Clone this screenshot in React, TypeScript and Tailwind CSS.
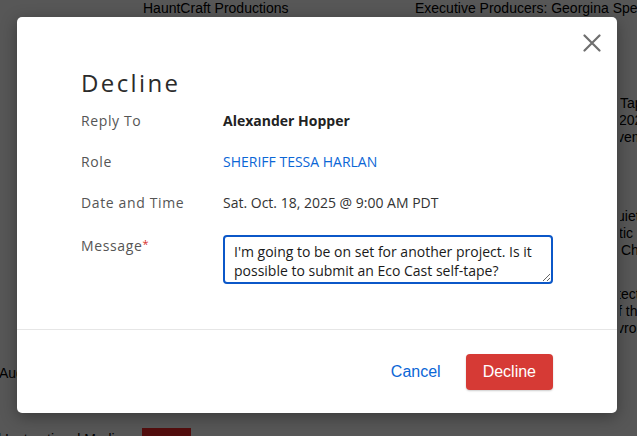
import React, { useState } from "react";

function CloseIcon() {
  return (
    <svg width="18" height="18" viewBox="0 0 18 18" fill="none" stroke="currentColor" strokeWidth="2.2" strokeLinecap="round">
      <path d="M1.5 1.5 L16.5 16.5 M16.5 1.5 L1.5 16.5" />
    </svg>
  );
}

// page behind the dialog, mostly hidden by the backdrop
function BackgroundPage() {
  return (
    <div className="grid h-full grid-cols-[142px_273px_205px_1fr] bg-white font-['Liberation_Sans',Arial,sans-serif] text-[14px] leading-[17px] text-black">
      <div className="flex flex-col pt-[365px] -ml-[1px]">
        <span className="whitespace-nowrap">Audio</span>
        <span className="mt-[49px] whitespace-nowrap -ml-[1px]">l Instructional Media</span>
      </div>
      <div className="flex flex-col">
        <span className="ml-[1px] whitespace-nowrap">HauntCraft Productions</span>
        <div className="mt-[411px] h-[20px] w-[49px] bg-[#f22a2a]" />
      </div>
      <div className="flex flex-col">
        <span className="whitespace-nowrap">Executive Producers: Georgina Spencer</span>
      </div>
      <div className="flex flex-col overflow-hidden whitespace-nowrap">
        <div className="mt-[95px] flex flex-col">
          <span>Tape</span>
          <span className="-ml-[1px]">2025</span>
          <span className="-ml-[3px]">vember</span>
        </div>
        <div className="mt-[62px] flex flex-col">
          <span className="-ml-[3px]">uiet</span>
          <span className="-ml-[1px]">tic l</span>
          <span className="ml-[1px]">Ch</span>
        </div>
        <div className="mt-[27px] flex flex-col">
          <span className="-ml-[3px]">tect</span>
          <span className="-ml-[2px]">f the</span>
          <span className="-ml-[3px]">vron</span>
        </div>
      </div>
    </div>
  );
}

function InfoRow({ label, children }: { label: React.ReactNode; children: React.ReactNode }) {
  return (
    <>
      <div className="leading-5 tracking-[0.045em] text-[#555]">{label}</div>
      <div className="leading-5">{children}</div>
    </>
  );
}

export default function App() {
  const [message, setMessage] = useState(
    "I'm going to be on set for another project. Is it possible to submit an Eco Cast self-tape?"
  );

  return (
    <div className="relative h-[436px] w-[637px] overflow-hidden">
      <BackgroundPage />

      {/* backdrop + dialog */}
      <div className="absolute inset-0 bg-black/[0.66] pl-[17px] pt-[17px]">
        <div className="relative w-[600px] rounded-[5px] bg-white font-['Open_Sans',sans-serif] text-[14px] shadow-[0_4px_16px_rgba(0,0,0,0.35)]">
          <button type="button" className="absolute right-[16px] top-[16px] p-[0.5px] text-[#6f6f6f]">
            <CloseIcon />
          </button>

          <div className="px-16 pb-[45px] pt-[50px]">
            <h2 className="text-[24px] font-normal leading-8 tracking-[0.1em] text-[#2b2b2b]">Decline</h2>

            <div className="mt-3 grid grid-cols-[142px_1fr] gap-y-[21px]">
              <InfoRow label="Reply To">
                <span className="font-bold text-[#222]">Alexander Hopper</span>
              </InfoRow>
              <InfoRow label="Role">
                <a className="text-[#0b66d6]">SHERIFF TESSA HARLAN</a>
              </InfoRow>
              <InfoRow label="Date and Time">
                <span className="text-[#333]">Sat. Oct. 18, 2025 @ 9:00 AM PDT</span>
              </InfoRow>
              <InfoRow
                label={
                  <>
                    Message<span className="align-[3px] text-[11px] text-[#d8312b]">*</span>
                  </>
                }
              >
                <textarea
                  value={message}
                  onChange={(e) => setMessage(e.target.value)}
                  className="mt-[1px] block h-[49px] w-[330px] resize-y rounded-[4px] border-2 border-[#0b57c8] px-[9px] pb-[2px] pt-[5px] font-['Open_Sans',sans-serif] text-[14px] leading-[19px] text-[#1a1a1a] outline-none"
                />
              </InfoRow>
            </div>
          </div>

          <div className="flex items-center justify-end gap-[25px] border-t border-[#e6e6e6] px-16 pb-[23px] pt-[24px] font-['Liberation_Sans',Arial,sans-serif] text-[16px]">
            <button type="button" className="text-[#0b66d6]">
              Cancel
            </button>
            <button
              type="button"
              className="h-9 rounded-[4px] bg-[#d63a35] px-[17px] text-white shadow-[0_1px_2px_rgba(0,0,0,0.2)]"
            >
              Decline
            </button>
          </div>
        </div>
      </div>
    </div>
  );
}
